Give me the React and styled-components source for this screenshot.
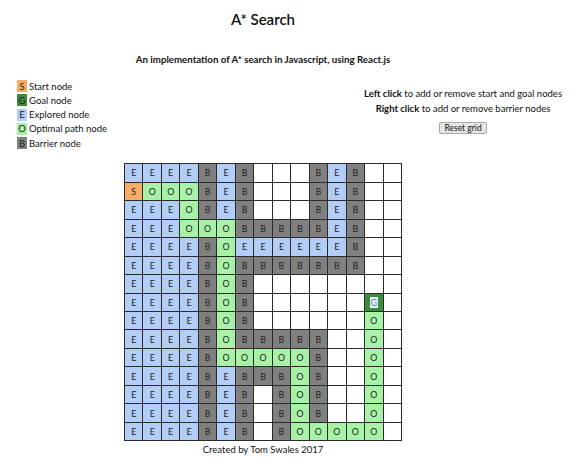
import React from 'react';
import styled, { createGlobalStyle } from 'styled-components';

const GlobalStyle = createGlobalStyle`
  body {
    margin: 0;
    background: #ffffff;
    font-family: Lato, "Liberation Sans", sans-serif;
    color: #111;
  }
`;

const colors = {
  S: '#f6ad68',
  G: '#3b8c3b',
  E: '#b2cdf6',
  O: '#a8f2a8',
  B: '#808080',
  _: '#ffffff',
};

const rows = [
  'EEEEBEB___BEB__',
  'SOOOBEB___BEB__',
  'EEEOBEB___BEB__',
  'EEEOOOBBBBBEB__',
  'EEEEBOEEEEEEB__',
  'EEEEBOBBBBBBB__',
  'EEEEBOB________',
  'EEEEBOB______G_',
  'EEEEBOB______O_',
  'EEEEBOBBBBB__O_',
  'EEEEBOOOOOB__O_',
  'EEEEBEBBBOB__O_',
  'EEEEBEB_BOB__O_',
  'EEEEBEB_BOB__O_',
  'EEEEBEB_BOOOOO_',
];

const legend = [
  { key: 'S', label: 'Start node' },
  { key: 'G', label: 'Goal node' },
  { key: 'E', label: 'Explored node' },
  { key: 'O', label: 'Optimal path node' },
  { key: 'B', label: 'Barrier node' },
];

const Page = styled.div`
  width: 579px;
  padding-top: 10px;
`;

const Column = styled.div`
  width: 526px;
  display: flex;
  flex-direction: column;
  align-items: center;
`;

const Title = styled.h1`
  margin: 0;
  font-size: 15px;
  line-height: 18px;
  font-weight: 600;
`;

const Subtitle = styled.h2`
  margin: 24px 0 0;
  font-size: 9.7px;
  line-height: 14px;
  font-weight: 700;
`;

const InfoRow = styled.div`
  display: flex;
  justify-content: space-between;
  align-items: flex-start;
  padding: 0 17px;
  margin-top: 13px;
`;

const Legend = styled.ul`
  list-style: none;
  margin: 0;
  padding: 0;
`;

const LegendItem = styled.li`
  display: flex;
  align-items: center;
  gap: 2px;
  height: 14.25px;
  font-size: 9.5px;
`;

const Swatch = styled.span`
  display: inline-flex;
  justify-content: center;
  align-items: center;
  width: 10px;
  height: 12px;
  background: ${p => colors[p.$type]};
  font-size: 9.5px;
  color: #222;
`;

const Instructions = styled.div`
  margin-top: 7px;
  display: flex;
  flex-direction: column;
  align-items: center;
  font-size: 9.5px;
  line-height: 15px;
`;

const ResetButton = styled.button`
  margin-top: 6px;
  font-family: Lato, "Liberation Sans", sans-serif;
  font-size: 8.5px;
  line-height: 10px;
  padding: 0 4px;
  background: #e6e6e6;
  border: 1px solid #a9a9a9;
  border-radius: 2px;
  color: #111;
`;

const Board = styled.div`
  margin-top: 13px;
  width: 278px;
  height: 278px;
  box-sizing: border-box;
  display: grid;
  grid-template-columns: repeat(15, 1fr);
  grid-template-rows: repeat(15, 1fr);
  border-left: 1px solid #2a2a2a;
  border-top: 1px solid #2a2a2a;
`;

const Cell = styled.div`
  box-sizing: border-box;
  border-right: 1px solid #2a2a2a;
  border-bottom: 1px solid #2a2a2a;
  background: ${p => colors[p.$type]};
  display: flex;
  justify-content: center;
  align-items: center;
  font-size: 8.8px;
  color: #222;
`;

const Selected = styled.span`
  background: #e8f0fb;
  color: #3f86e6;
  padding: 0 1px;
  line-height: 11px;
`;

const Footer = styled.div`
  margin-top: 2px;
  font-size: 9.5px;
  line-height: 14px;
`;

export default function App() {
  return (
    <Page>
      <GlobalStyle />
      <Column>
        <Title>A* Search</Title>
        <Subtitle>An implementation of A* search in Javascript, using React.js</Subtitle>
      </Column>
      <InfoRow>
        <Legend>
          {legend.map(item => (
            <LegendItem key={item.key}>
              <Swatch $type={item.key}>{item.key}</Swatch>
              {item.label}
            </LegendItem>
          ))}
        </Legend>
        <Instructions>
          <div><b>Left click</b> to add or remove start and goal nodes</div>
          <div><b>Right click</b> to add or remove barrier nodes</div>
          <ResetButton>Reset grid</ResetButton>
        </Instructions>
      </InfoRow>
      <Column>
        <Board>
          {rows.map((row, r) =>
            row.split('').map((t, c) => (
              <Cell key={`${r}-${c}`} $type={t}>
                {t === 'G' ? <Selected>G</Selected> : t === '_' ? '' : t}
              </Cell>
            ))
          )}
        </Board>
        <Footer>Created by Tom Swales 2017</Footer>
      </Column>
    </Page>
  );
}
